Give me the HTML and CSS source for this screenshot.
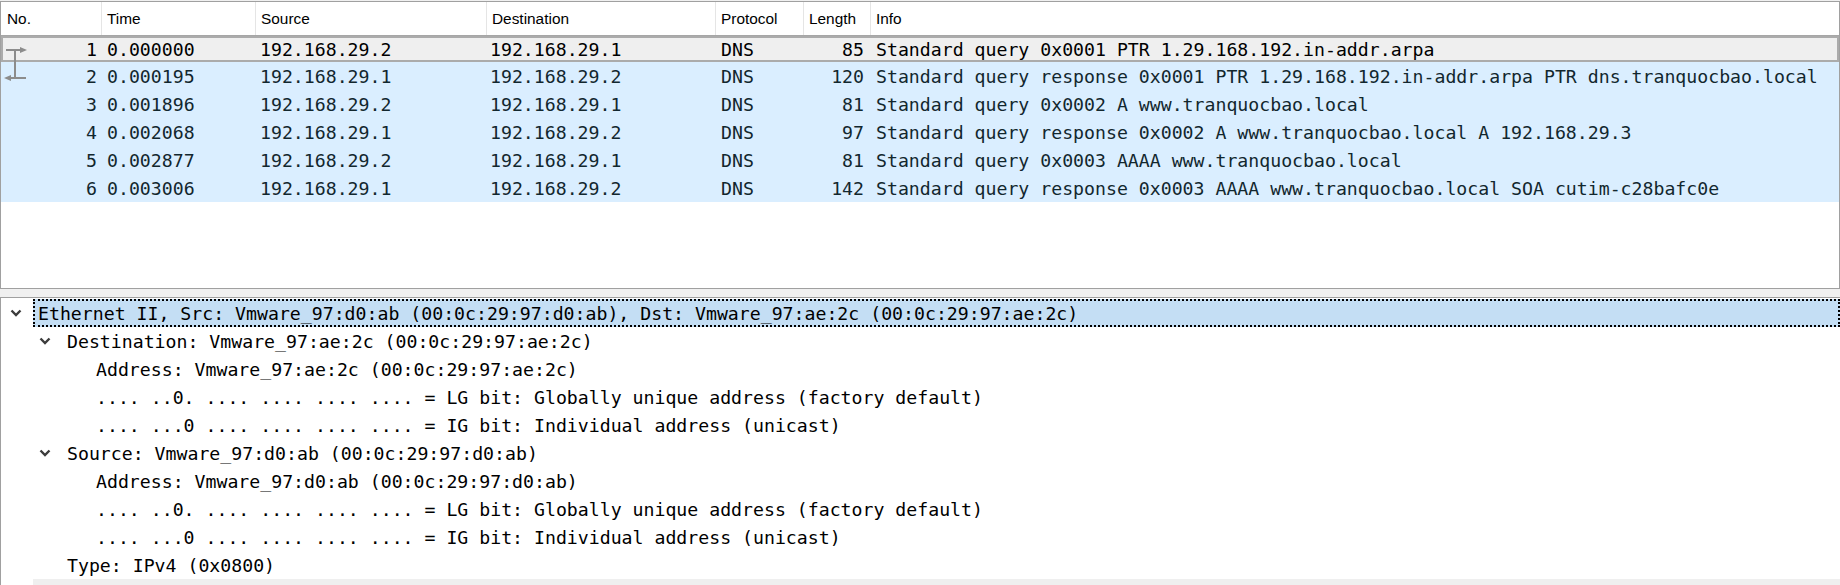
FILE: index.html
```html
<!DOCTYPE html>
<html lang="en">
<head>
<meta charset="utf-8">
<title>Wireshark packet view</title>
<link rel="stylesheet" href="styles.css">
</head>
<body>
<div class="app">
  <section class="packet-list">
    <div class="pl-header">
      <div class="hc hc-no">No.</div>
      <div class="hc">Time</div>
      <div class="hc">Source</div>
      <div class="hc">Destination</div>
      <div class="hc">Protocol</div>
      <div class="hc">Length</div>
      <div class="hc hc-last">Info</div>
    </div>
    <div class="pl-body">
      <svg class="related" width="30" height="50" viewBox="0 0 30 50" aria-hidden="true">
        <g stroke="#8c8c8c" stroke-width="2" fill="none">
          <line x1="5" y1="14" x2="20" y2="14"/>
          <line x1="14" y1="13" x2="14" y2="43"/>
          <line x1="9" y1="42" x2="25" y2="42"/>
        </g>
        <g fill="#8c8c8c">
          <polygon points="19,11 26,14 19,17"/>
          <polygon points="10,39 3,42 10,45"/>
        </g>
      </svg>
      <div class="pl-row sel">
        <span class="c-no">1</span><span class="c-time">0.000000</span><span class="c-src">192.168.29.2</span><span class="c-dst">192.168.29.1</span><span class="c-proto">DNS</span><span class="c-len">85</span><span class="c-info">Standard query 0x0001 PTR 1.29.168.192.in-addr.arpa</span>
      </div>
      <div class="pl-row">
        <span class="c-no">2</span><span class="c-time">0.000195</span><span class="c-src">192.168.29.1</span><span class="c-dst">192.168.29.2</span><span class="c-proto">DNS</span><span class="c-len">120</span><span class="c-info">Standard query response 0x0001 PTR 1.29.168.192.in-addr.arpa PTR dns.tranquocbao.local</span>
      </div>
      <div class="pl-row">
        <span class="c-no">3</span><span class="c-time">0.001896</span><span class="c-src">192.168.29.2</span><span class="c-dst">192.168.29.1</span><span class="c-proto">DNS</span><span class="c-len">81</span><span class="c-info">Standard query 0x0002 A www.tranquocbao.local</span>
      </div>
      <div class="pl-row">
        <span class="c-no">4</span><span class="c-time">0.002068</span><span class="c-src">192.168.29.1</span><span class="c-dst">192.168.29.2</span><span class="c-proto">DNS</span><span class="c-len">97</span><span class="c-info">Standard query response 0x0002 A www.tranquocbao.local A 192.168.29.3</span>
      </div>
      <div class="pl-row">
        <span class="c-no">5</span><span class="c-time">0.002877</span><span class="c-src">192.168.29.2</span><span class="c-dst">192.168.29.1</span><span class="c-proto">DNS</span><span class="c-len">81</span><span class="c-info">Standard query 0x0003 AAAA www.tranquocbao.local</span>
      </div>
      <div class="pl-row">
        <span class="c-no">6</span><span class="c-time">0.003006</span><span class="c-src">192.168.29.1</span><span class="c-dst">192.168.29.2</span><span class="c-proto">DNS</span><span class="c-len">142</span><span class="c-info">Standard query response 0x0003 AAAA www.tranquocbao.local SOA cutim-c28bafc0e</span>
      </div>
    </div>
  </section>

  <section class="detail">
    <div class="tree-row">
      <span class="tog"><svg class="chev" width="12" height="8" viewBox="0 0 12 8"><polyline points="1.5,1.5 6,6 10.5,1.5"/></svg></span>
      <span class="label focus">Ethernet II, Src: Vmware_97:d0:ab (00:0c:29:97:d0:ab), Dst: Vmware_97:ae:2c (00:0c:29:97:ae:2c)</span>
    </div>
    <div class="tree-row lvl1">
      <span class="tog"><svg class="chev" width="12" height="8" viewBox="0 0 12 8"><polyline points="1.5,1.5 6,6 10.5,1.5"/></svg></span>
      <span class="label">Destination: Vmware_97:ae:2c (00:0c:29:97:ae:2c)</span>
    </div>
    <div class="tree-row lvl2">
      <span class="tog"></span>
      <span class="label">Address: Vmware_97:ae:2c (00:0c:29:97:ae:2c)</span>
    </div>
    <div class="tree-row lvl2">
      <span class="tog"></span>
      <span class="label">.... ..0. .... .... .... .... = LG bit: Globally unique address (factory default)</span>
    </div>
    <div class="tree-row lvl2">
      <span class="tog"></span>
      <span class="label">.... ...0 .... .... .... .... = IG bit: Individual address (unicast)</span>
    </div>
    <div class="tree-row lvl1">
      <span class="tog"><svg class="chev" width="12" height="8" viewBox="0 0 12 8"><polyline points="1.5,1.5 6,6 10.5,1.5"/></svg></span>
      <span class="label">Source: Vmware_97:d0:ab (00:0c:29:97:d0:ab)</span>
    </div>
    <div class="tree-row lvl2">
      <span class="tog"></span>
      <span class="label">Address: Vmware_97:d0:ab (00:0c:29:97:d0:ab)</span>
    </div>
    <div class="tree-row lvl2">
      <span class="tog"></span>
      <span class="label">.... ..0. .... .... .... .... = LG bit: Globally unique address (factory default)</span>
    </div>
    <div class="tree-row lvl2">
      <span class="tog"></span>
      <span class="label">.... ...0 .... .... .... .... = IG bit: Individual address (unicast)</span>
    </div>
    <div class="tree-row lvl1">
      <span class="tog"></span>
      <span class="label">Type: IPv4 (0x0800)</span>
    </div>
    <div class="tree-row">
      <span class="tog"></span>
      <span class="label hover"></span>
    </div>
  </section>
</div>
</body>
</html>
```

FILE: styles.css
```css
html, body {
  margin: 0;
  padding: 0;
  background: #f0f0f0;
}

.app {
  width: 1840px;
  height: 585px;
  overflow: hidden;
  padding-top: 1px;
  box-sizing: border-box;
  display: flex;
  flex-direction: column;
}

/* ---------- packet list ---------- */
.packet-list {
  flex: none;
  height: 288px;
  box-sizing: border-box;
  border: 1px solid #a0a0a0;
  background: #ffffff;
  display: flex;
  flex-direction: column;
  overflow: hidden;
}

.pl-header,
.pl-row {
  display: grid;
  grid-template-columns: 101px 154px 231px 229px 88px 67px 1fr;
}

.pl-header {
  height: 34px;
  box-sizing: border-box;
  border-bottom: 1px solid #a6a6a6;
  font-family: "Liberation Sans", Arial, sans-serif;
  font-size: 15.4px;
  color: #000;
}

.hc {
  display: flex;
  align-items: center;
  padding-left: 5px;
  border-right: 1px solid #e5e5e5;
  white-space: nowrap;
}

.hc-no { padding-left: 6px; }
.hc-last { border-right: none; }

.pl-body {
  position: relative;
  flex: 1;
}

.related {
  position: absolute;
  left: 0;
  top: 0;
}

.pl-row {
  height: 28px;
  align-items: center;
  background: #daeeff;
  color: #12272e;
  font-family: "DejaVu Sans Mono", "Liberation Mono", monospace;
  font-size: 18.2px;
  white-space: pre;
}

.pl-row.sel {
  height: 26px;
  background: #efefef;
  color: #000;
  box-shadow: inset 0 0 0 2px #ababab;
}

.pl-row > span {
  overflow: hidden;
}

.c-no { text-align: right; padding-right: 5px; }
.c-time { padding-left: 5px; }
.c-src { padding-left: 4px; }
.c-dst { padding-left: 3px; }
.c-proto { padding-left: 5px; }
.c-len { text-align: right; padding-right: 7px; }
.c-info { padding-left: 5px; }

/* ---------- packet details ---------- */
.detail {
  flex: 1;
  margin-top: 8px;
  border-top: 1px solid #a0a0a0;
  border-left: 1px solid #a0a0a0;
  background: #ffffff;
  padding-top: 1px;
}

.tree-row {
  display: flex;
  height: 28px;
  font-family: "DejaVu Sans Mono", "Liberation Mono", monospace;
  font-size: 18.2px;
  color: #000;
  white-space: pre;
}

.tree-row.lvl1 { padding-left: 29px; }
.tree-row.lvl2 { padding-left: 58px; }

.tog {
  flex: none;
  width: 32px;
  display: flex;
  align-items: center;
  padding-left: 9px;
  box-sizing: border-box;
}

.chev polyline {
  fill: none;
  stroke: #3c3c3c;
  stroke-width: 2.4;
}

.label {
  flex: 1;
  display: flex;
  align-items: center;
  padding-left: 5px;
  overflow: hidden;
}

.label.focus {
  padding-left: 3px;
  background: #c4def4;
  border: 2px dotted #000;
}

.label.hover {
  background: #efefef;
}
```
